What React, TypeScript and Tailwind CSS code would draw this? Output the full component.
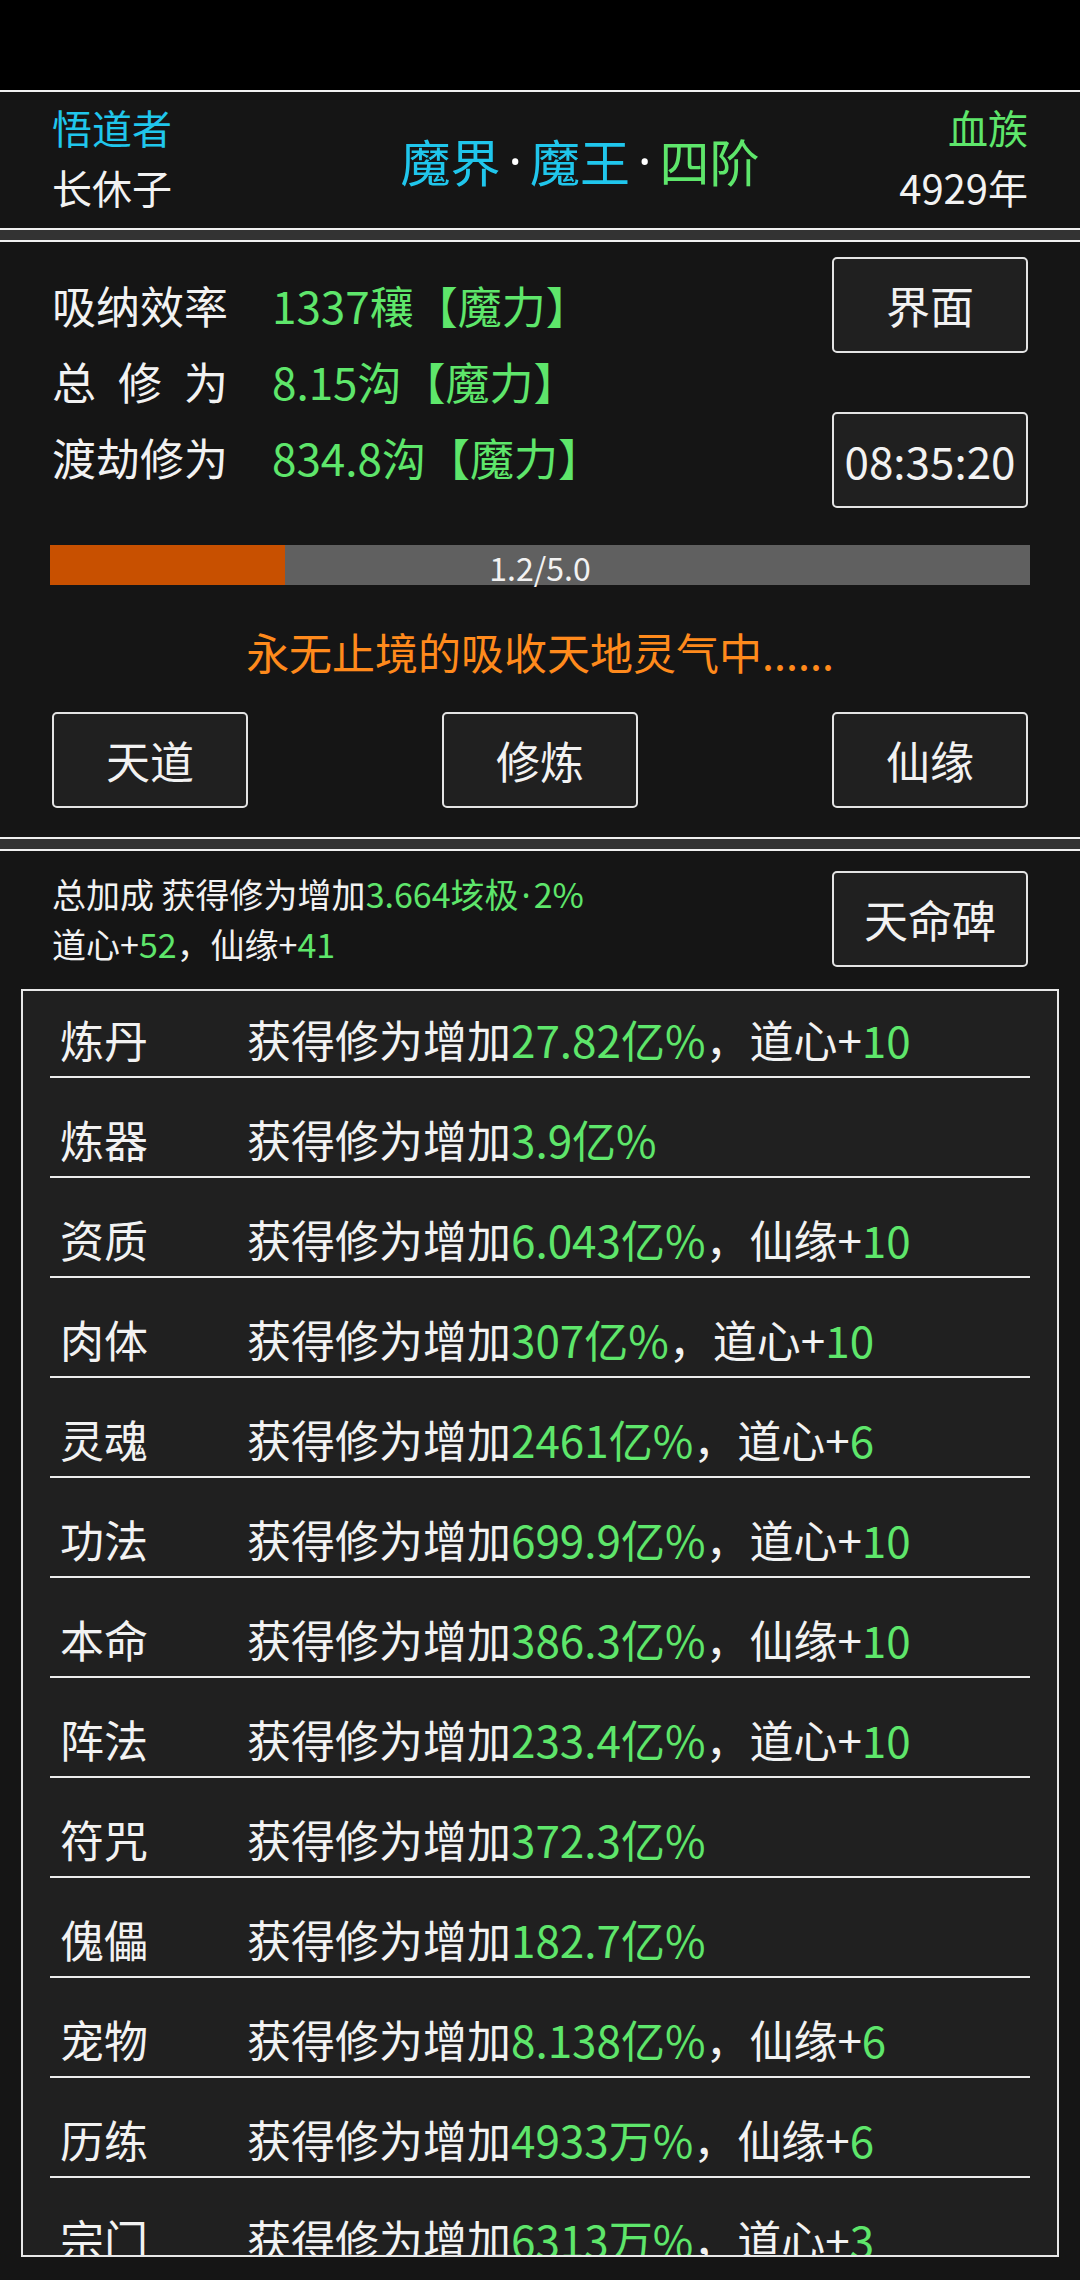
import React from "react";

const G = "text-[#5ee66b]";
const C = "text-[#20c6ec]";

type Row = { name: string; val: string; extra?: string; extraVal?: string };

const rows: Row[] = [
  { name: "炼丹", val: "27.82亿%", extra: "，道心+", extraVal: "10" },
  { name: "炼器", val: "3.9亿%" },
  { name: "资质", val: "6.043亿%", extra: "，仙缘+", extraVal: "10" },
  { name: "肉体", val: "307亿%", extra: "，道心+", extraVal: "10" },
  { name: "灵魂", val: "2461亿%", extra: "，道心+", extraVal: "6" },
  { name: "功法", val: "699.9亿%", extra: "，道心+", extraVal: "10" },
  { name: "本命", val: "386.3亿%", extra: "，仙缘+", extraVal: "10" },
  { name: "阵法", val: "233.4亿%", extra: "，道心+", extraVal: "10" },
  { name: "符咒", val: "372.3亿%" },
  { name: "傀儡", val: "182.7亿%" },
  { name: "宠物", val: "8.138亿%", extra: "，仙缘+", extraVal: "6" },
  { name: "历练", val: "4933万%", extra: "，仙缘+", extraVal: "6" },
  { name: "宗门", val: "6313万%", extra: "，道心+", extraVal: "3" },
];

function Btn({ children }: { children: React.ReactNode }) {
  return (
    <div className="w-[196px] h-[96px] shrink-0 rounded-[5px] border-2 border-[#e4e4e4] bg-[#202020] flex items-center justify-center text-[44px] leading-none text-[#f2f2f2]">
      {children}
    </div>
  );
}

function Divider() {
  return (
    <div className="h-[14px] bg-[#333333] border-t-2 border-b-2 border-[#f0f0f0] shrink-0" />
  );
}

function Dot() {
  return <span className="font-['Noto_Sans',sans-serif] text-white mx-[8px]">·</span>;
}

export default function App() {
  return (
    <div className="w-[1080px] h-[2280px] bg-black overflow-hidden flex flex-col font-['Noto_Sans_CJK_SC','Noto_Sans',sans-serif] text-[#f2f2f2]">
      {/* status bar area */}
      <div className="h-[90px] shrink-0 bg-black border-b-2 border-[#f0f0f0] box-content" />

      {/* header */}
      <div className="h-[136px] shrink-0 bg-[#151515] flex items-center px-[52px]">
        <div className="w-[214px] shrink-0 flex flex-col -mt-[6px]">
          <div className={`h-[60px] flex items-center text-[40px] leading-none whitespace-nowrap ${C}`}>悟道者</div>
          <div className="h-[60px] flex items-center text-[40px] leading-none whitespace-nowrap">长休子</div>
        </div>
        <div className="flex-1 flex justify-center items-center text-[50px] leading-none whitespace-nowrap">
          <span className={C}>魔界</span>
          <Dot />
          <span className={C}>魔王</span>
          <Dot />
          <span className={G}>四阶</span>
        </div>
        <div className="w-[134px] shrink-0 flex flex-col items-end -mt-[6px]">
          <div className={`h-[60px] flex items-center text-[40px] leading-none whitespace-nowrap ${G}`}>血族</div>
          <div className="h-[60px] flex items-center text-[40px] leading-none whitespace-nowrap">4929年</div>
        </div>
      </div>

      <Divider />

      {/* cultivation panel */}
      <div className="h-[595px] shrink-0 bg-[#151515] flex flex-col">
        <div className="flex justify-between pl-[52px] pr-[52px] pt-[15px]">
          <div className="flex flex-col pt-[10px]">
            <div className="h-[76px] flex items-center text-[44px] leading-none whitespace-nowrap">
              <span className="w-[176px]">吸纳效率</span>
              <span className={`ml-[44px] ${G}`}>1337穰【魔力】</span>
            </div>
            <div className="h-[76px] flex items-center text-[44px] leading-none whitespace-nowrap">
              <span className="w-[176px] flex justify-between">
                <span>总</span>
                <span>修</span>
                <span>为</span>
              </span>
              <span className={`ml-[44px] ${G}`}>8.15沟【魔力】</span>
            </div>
            <div className="h-[76px] flex items-center text-[44px] leading-none whitespace-nowrap">
              <span className="w-[176px]">渡劫修为</span>
              <span className={`ml-[44px] ${G}`}>834.8沟【魔力】</span>
            </div>
          </div>
          <div className="flex flex-col gap-[59px]">
            <Btn>界面</Btn>
            <Btn>
              <span className="text-[44px]">08:35:20</span>
            </Btn>
          </div>
        </div>

        <div className="mx-[50px] mt-[37px] h-[40px] bg-[#606060] relative flex items-center justify-center">
          <div className="absolute left-0 top-0 h-full bg-[#c85000]" style={{ width: `${(1.2 / 5.0) * 100}%` }} />
          <span className="relative text-[32px] leading-none pt-[3px]">1.2/5.0</span>
        </div>

        <div className="mt-[36px] h-[60px] flex items-center justify-center text-[43px] leading-none text-[#ff8a1c] whitespace-nowrap">
          永无止境的吸收天地灵气中......
        </div>

        <div className="mt-[31px] flex justify-between px-[52px]">
          <Btn>天道</Btn>
          <Btn>修炼</Btn>
          <Btn>仙缘</Btn>
        </div>
      </div>

      <Divider />

      {/* bonus panel */}
      <div className="flex-1 bg-[#151515] flex flex-col">
        <div className="flex justify-between pl-[52px] pr-[52px] pt-[20px]">
          <div className="flex flex-col -mt-[2px]">
            <div className="h-[50px] flex items-center text-[34px] leading-none whitespace-nowrap">
              <span>总加成 获得修为增加</span>
              <span className={G}>
                3.664垓极<span className="font-['Noto_Sans',sans-serif] mx-[3px]">·</span>2%
              </span>
            </div>
            <div className="h-[50px] flex items-center text-[34px] leading-none whitespace-nowrap">
              <span>道心+</span>
              <span className={G}>52</span>
              <span>，仙缘+</span>
              <span className={G}>41</span>
            </div>
          </div>
          <Btn>天命碑</Btn>
        </div>

        <div className="mx-[21px] mt-[20px] h-[1268px] border-2 border-[#e8e8e8] bg-[#202020] overflow-hidden">
          <div className="-mt-[13px] mx-[27px]">
            {rows.map((r) => (
              <div
                key={r.name}
                className="h-[100px] border-b-2 border-[#ececec] flex items-center pt-[24px] text-[44px] leading-none whitespace-nowrap"
              >
                <span className="w-[197px] pl-[10px] shrink-0">{r.name}</span>
                <span>获得修为增加</span>
                <span className={G}>{r.val}</span>
                {r.extra && <span>{r.extra}</span>}
                {r.extraVal && <span className={G}>{r.extraVal}</span>}
              </div>
            ))}
          </div>
        </div>
      </div>
    </div>
  );
}
